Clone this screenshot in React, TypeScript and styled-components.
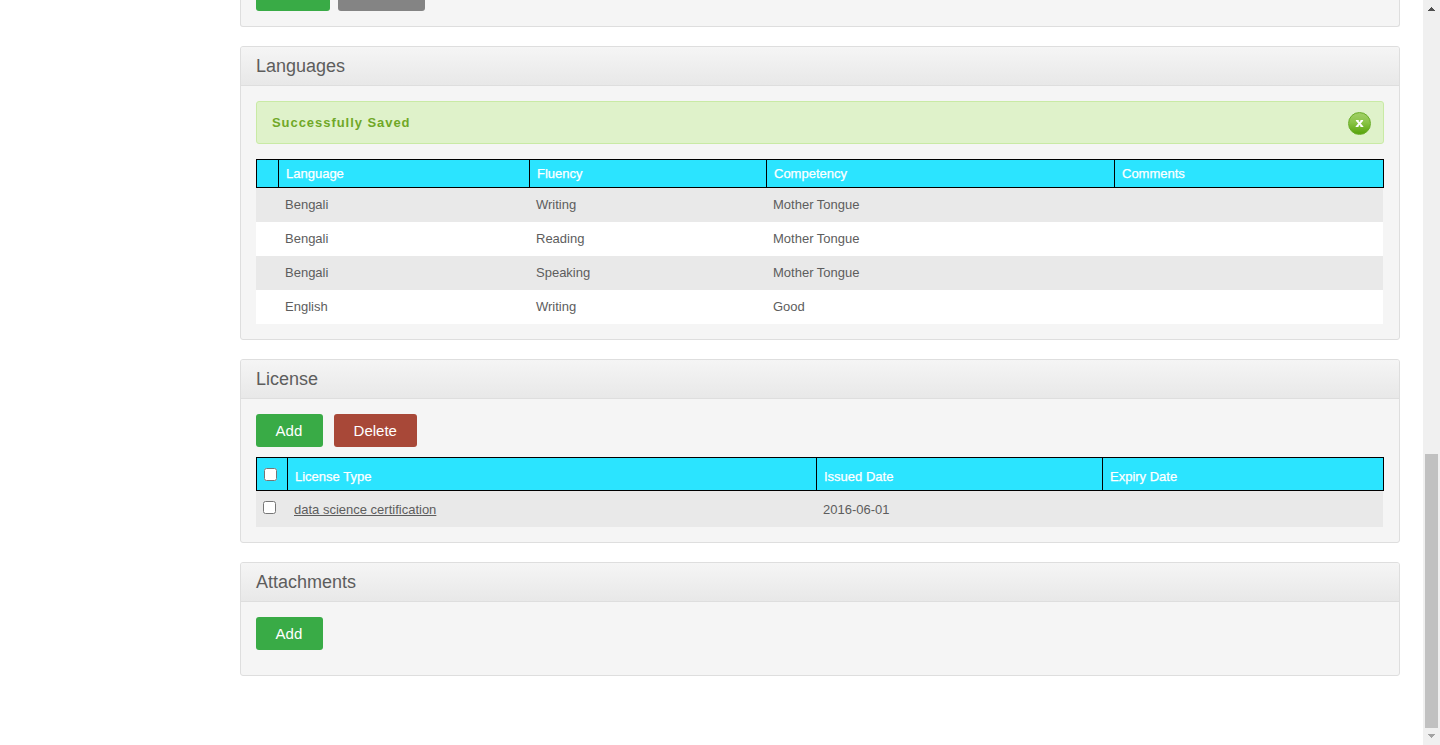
import React from 'react';
import styled, { createGlobalStyle } from 'styled-components';

const GlobalStyle = createGlobalStyle`
  *, *::before, *::after { box-sizing: border-box; }
  html, body { margin: 0; background: #fff; overflow: hidden; }
  body { font: 13px/16px "Liberation Sans", Arial, sans-serif; color: #5d5d5d; }
`;

const Screen = styled.div`
  display: flex;
  height: 745px;
  overflow: hidden;
`;

const Content = styled.main`
  flex: 1;
  display: flex;
  flex-direction: column;
  gap: 19px;
  padding: 0 23px 0 240px;
`;

const Panel = styled.section<{ $height: number }>`
  flex: none;
  height: ${(p) => p.$height}px;
  border: 1px solid #dedede;
  border-radius: 3px;
  background: #f5f5f5;
  overflow: hidden;
`;

const ClippedPanel = styled(Panel)`
  border-top: 0;
  border-top-left-radius: 0;
  border-top-right-radius: 0;
  padding: 0 15px;
`;

const PanelTitle = styled.h2`
  height: 39px;
  margin: 0;
  padding: 0 15px;
  border-bottom: 1px solid #dedede;
  background: linear-gradient(#f5f5f5, #e8e8e8);
  font-size: 18px;
  font-weight: 400;
  line-height: 38px;
`;

const PanelBody = styled.div`
  padding: 15px;
`;

const ButtonBar = styled.div<{ $gap?: number; $bottom?: number }>`
  display: flex;
  gap: ${(p) => p.$gap ?? 11}px;
  margin-bottom: ${(p) => p.$bottom ?? 0}px;
`;

const tones = { green: '#39ab46', red: '#a84838', gray: '#848484' };

const Button = styled.button<{ $tone: keyof typeof tones; $width: number }>`
  width: ${(p) => p.$width}px;
  height: 33px;
  padding: 0 0 0 19.6px;
  border: 0;
  border-radius: 3px;
  background: ${(p) => tones[p.$tone]};
  color: #fff;
  font: 15px/33px "Liberation Sans", Arial, sans-serif;
  text-align: left;
`;

const ButtonEdge = styled(Button)`
  height: 11px;
  border-top-left-radius: 0;
  border-top-right-radius: 0;
`;

const Alert = styled.div`
  display: flex;
  align-items: center;
  justify-content: space-between;
  height: 43px;
  margin-bottom: 15px;
  padding: 1px 12px 0 15px;
  border: 1px solid #c9eaa5;
  border-radius: 3px;
  background: #dff2ca;
`;

const AlertText = styled.strong`
  color: #70a827;
  font-size: 13px;
  line-height: 16px;
  letter-spacing: 0.95px;
`;

const CloseButton = styled.button`
  display: flex;
  width: 23px;
  height: 23px;
  padding: 0;
  border: 1px solid #69ad27;
  border-radius: 50%;
  background: linear-gradient(#9ccc60 10%, #8ac447 45%, #5ba60f 95%);
`;

const Table = styled.div`
  display: flex;
  flex-direction: column;
`;

const HeadRow = styled.div<{ $columns: string; $height: number }>`
  display: grid;
  grid-template-columns: ${(p) => p.$columns};
  height: ${(p) => p.$height}px;
  border: solid #000;
  border-width: 1px 1px 1px 0;
  background: #2be4ff;
  color: #fff;
`;

const HeadCell = styled.div<{ $top?: number }>`
  padding: ${(p) => p.$top ?? 6}px 7px 0;
  border-left: 1px solid #000;
  -webkit-text-stroke: 0.25px #fff;
`;

const Row = styled.div<{ $columns: string; $height: number }>`
  display: grid;
  grid-template-columns: ${(p) => p.$columns};
  height: ${(p) => p.$height}px;
  width: calc(100% - 1px);
  background: #fff;
  &:nth-child(even) { background: #e9e9e9; }
`;

const Cell = styled.div<{ $top?: number }>`
  padding: ${(p) => p.$top ?? 9}px 7px 0;
`;

const Link = styled.a`
  color: inherit;
  text-decoration: underline;
`;

const Checkbox = styled.input.attrs({ type: 'checkbox' })`
  display: block;
  width: 13px;
  height: 13px;
  margin: 0;
`;

const Scrollbar = styled.aside`
  display: flex;
  flex-direction: column;
  align-items: center;
  justify-content: space-between;
  width: 17px;
  background: #f0f0f0;
`;

const Arrow = styled.svg`
  display: block;
  width: 17px;
  height: 17px;
`;

const Thumb = styled.div`
  width: 13px;
  height: 274px;
  margin-top: auto;
  background: #c1c1c1;
`;

const languageColumns = '22px 251px 237px 348px 1fr';
const licenseColumns = '31px 529px 286px 1fr';

const languages = [
  ['Bengali', 'Writing', 'Mother Tongue', ''],
  ['Bengali', 'Reading', 'Mother Tongue', ''],
  ['Bengali', 'Speaking', 'Mother Tongue', ''],
  ['English', 'Writing', 'Good', ''],
];

export default function App() {
  return (
    <>
      <GlobalStyle />
      <Screen>
        <Content>
          <ClippedPanel $height={27}>
            <ButtonBar $gap={8}>
              <ButtonEdge $tone="green" $width={74} />
              <ButtonEdge $tone="gray" $width={87} />
            </ButtonBar>
          </ClippedPanel>

          <Panel $height={294}>
            <PanelTitle>Languages</PanelTitle>
            <PanelBody>
              <Alert>
                <AlertText>Successfully Saved</AlertText>
                <CloseButton aria-label="Close">
                  <svg width="21" height="21" viewBox="0 0 21 21">
                    <path d="M7.9 7.6 L13.1 13.4 M13.1 7.6 L7.9 13.4" stroke="#fff" strokeWidth="2" />
                    <path d="M6.9 7.5h2.8 M11.5 7.5h2.6 M6.7 13.5h2.8 M11.5 13.5h2.8" stroke="#fff" strokeWidth="1" />
                  </svg>
                </CloseButton>
              </Alert>
              <Table>
                <HeadRow $columns={languageColumns} $height={29}>
                  {['', 'Language', 'Fluency', 'Competency', 'Comments'].map((h) => (
                    <HeadCell key={h}>{h}</HeadCell>
                  ))}
                </HeadRow>
                {languages.map((row, i) => (
                  <Row key={i} $columns={languageColumns} $height={34}>
                    <Cell />
                    {row.map((value, j) => (
                      <Cell key={j}>{value}</Cell>
                    ))}
                  </Row>
                ))}
              </Table>
            </PanelBody>
          </Panel>

          <Panel $height={184}>
            <PanelTitle>License</PanelTitle>
            <PanelBody>
              <ButtonBar $bottom={10}>
                <Button $tone="green" $width={67}>Add</Button>
                <Button $tone="red" $width={83}>Delete</Button>
              </ButtonBar>
              <Table>
                <HeadRow $columns={licenseColumns} $height={34}>
                  <HeadCell $top={10}><Checkbox /></HeadCell>
                  <HeadCell $top={11}>License Type</HeadCell>
                  <HeadCell $top={11}>Issued Date</HeadCell>
                  <HeadCell $top={11}>Expiry Date</HeadCell>
                </HeadRow>
                <Row $columns={licenseColumns} $height={36}>
                  <Cell $top={10}><Checkbox /></Cell>
                  <Cell $top={11}><Link>data science certification</Link></Cell>
                  <Cell $top={11}>2016-06-01</Cell>
                  <Cell />
                </Row>
              </Table>
            </PanelBody>
          </Panel>

          <Panel $height={114}>
            <PanelTitle>Attachments</PanelTitle>
            <PanelBody>
              <ButtonBar>
                <Button $tone="green" $width={67}>Add</Button>
              </ButtonBar>
            </PanelBody>
          </Panel>
        </Content>

        <Scrollbar>
          <Arrow viewBox="0 0 17 17" shapeRendering="crispEdges">
            <path d="M8 7h1v1h1v1h1v1h1v1H5v-1h1v-1h1v-1h1z" fill="#505050" />
          </Arrow>
          <Thumb />
          <Arrow viewBox="0 0 17 17" shapeRendering="crispEdges">
            <path d="M5 6h7v1h-1v1h-1v1h-1v1H8v-1H7v-1H6v-1H5z" fill="#a3a3a3" />
          </Arrow>
        </Scrollbar>
      </Screen>
    </>
  );
}
